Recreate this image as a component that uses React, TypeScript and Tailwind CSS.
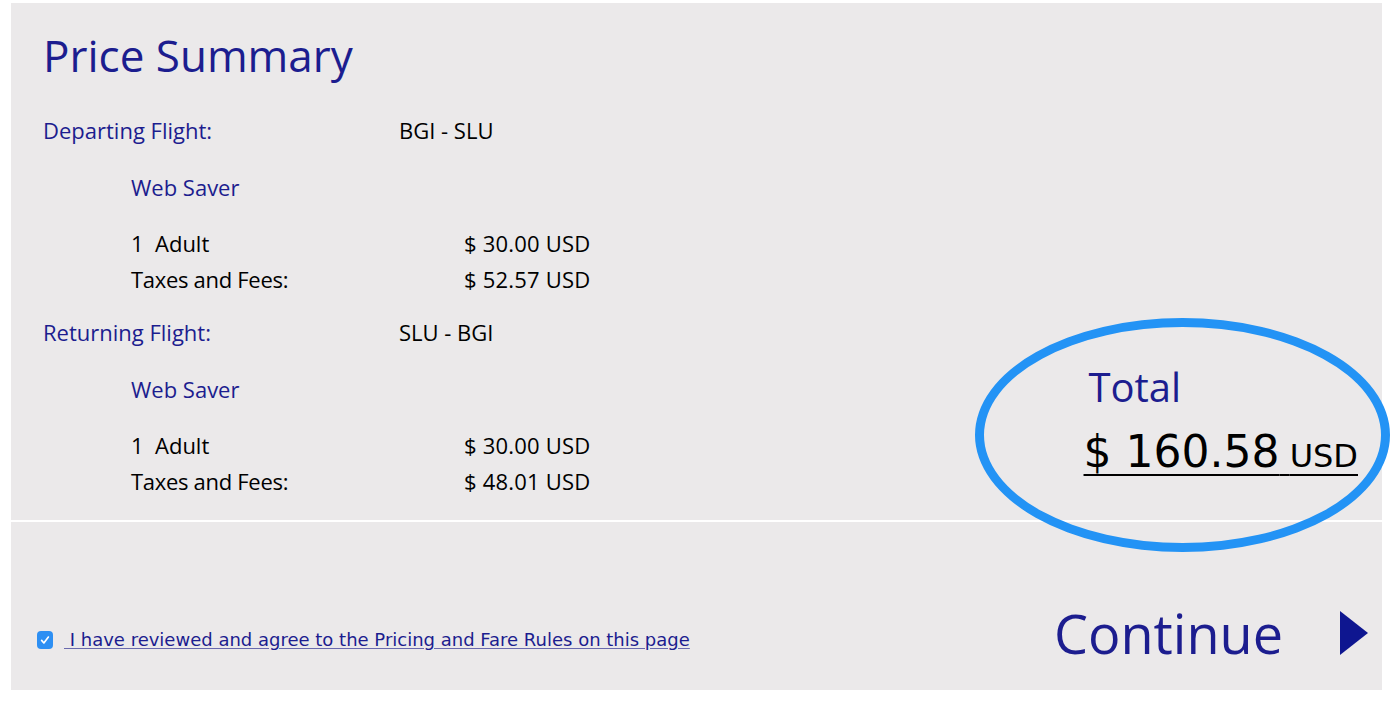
import React from 'react';

const BLUE = 'text-[#1c1d8f]';

type Leg = {
  label: string;
  route: string;
  fare: string;
  adult: string;
  taxes: string;
};

const LEGS: Leg[] = [
  { label: 'Departing Flight:', route: 'BGI - SLU', fare: 'Web Saver', adult: '$ 30.00 USD', taxes: '$ 52.57 USD' },
  { label: 'Returning Flight:', route: 'SLU - BGI', fare: 'Web Saver', adult: '$ 30.00 USD', taxes: '$ 48.01 USD' },
];

const LegBlock: React.FC<{ leg: Leg; first?: boolean }> = ({ leg, first }) => (
  <div className={first ? 'mt-[29px]' : 'mt-[17px]'}>
    <div className="flex h-[36px] items-center text-[22px]">
      <span className={`w-[356px] ${BLUE}`}>{leg.label}</span>
      <span className="text-black">{leg.route}</span>
    </div>
    <div className={`ml-[88px] mt-[21px] flex h-[36px] items-center text-[22px] ${BLUE}`}>{leg.fare}</div>
    <div className="ml-[88px] mt-[20px] text-[22px] text-black">
      <div className="flex h-[36px] items-center">
        <span className="w-[333px] whitespace-pre">{'1  Adult'}</span>
        <span className="tracking-[0.2px]">{leg.adult}</span>
      </div>
      <div className="flex h-[36px] items-center">
        <span className="w-[333px] tracking-[-0.3px]">Taxes and Fees:</span>
        <span className="tracking-[0.2px]">{leg.taxes}</span>
      </div>
    </div>
  </div>
);

export default function App() {
  return (
    <div className="relative h-[727px] w-[1400px] bg-white pl-[11px] pt-[3px] font-['Open_Sans',sans-serif]">
      <div className="w-[1371px] bg-[#ebe9ea]">
        {/* 明細 */}
        <div className="flex h-[519px] justify-between border-b-2 border-white px-[32px] pt-[24px]">
          <div>
            <h1 className={`h-[56px] text-[44px] leading-[56px] ${BLUE}`}>Price Summary</h1>
            {LEGS.map((leg, i) => (
              <LegBlock key={leg.label} leg={leg} first={i === 0} />
            ))}
          </div>
          <div className="-mr-[8px] flex flex-col justify-end pb-[32px]">
            <div className={`pl-[5px] text-[40px] leading-[52px] ${BLUE}`}>Total</div>
            <div className="mt-[13px] font-['DejaVu_Sans',sans-serif] leading-[52px] text-black underline decoration-2 underline-offset-[7px] [text-decoration-skip-ink:none]">
              <span className="text-[44px]">$ 160.58</span>
              <span className="text-[32px]">{' '}USD</span>
            </div>
          </div>
        </div>

        {/* 同意 & 次へ */}
        <div className="flex h-[168px] items-start justify-between pl-[26px] pr-[14px] pt-[79px]">
          <label className="mt-[25px] flex items-center">
            <span className="flex h-[18px] w-[16px] items-center justify-center rounded-[4px] bg-[#2d8ff3]">
              <svg viewBox="0 0 16 16" className="h-[12px] w-[12px]" fill="none" stroke="white" strokeWidth="2.2" strokeLinecap="round" strokeLinejoin="round">
                <path d="M3.5 8.5l3 3.5 6-8" />
              </svg>
            </span>
            <a className="ml-[11px] whitespace-pre font-['DejaVu_Sans',sans-serif] text-[18px] text-[#1c1d8f] underline decoration-[#6a6aae] underline-offset-2">
              {' I have reviewed and agree to the Pricing and Fare Rules on this page'}
            </a>
          </label>
          <button className={`flex items-center ${BLUE}`}>
            <span className="text-[54px] leading-[64px]">Continue</span>
            <svg viewBox="0 0 28 44" className="ml-[57px] h-[44px] w-[28px]">
              <path d="M0 0 L28 22 L0 44 Z" fill="#0e1690" />
            </svg>
          </button>
        </div>
      </div>

      {/* 注釈の楕円 */}
      <div className="pointer-events-none absolute left-[975px] top-[318px] h-[234px] w-[415px] rounded-[50%] border-[9px] border-[#2393f5]" />
    </div>
  );
}
